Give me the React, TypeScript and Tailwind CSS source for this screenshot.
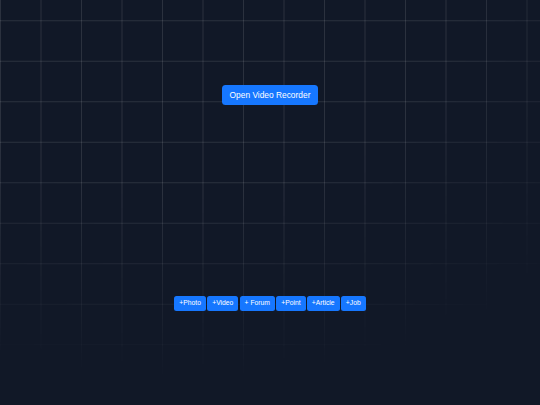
import React from "react";

const tags = ["+Photo", "+Video", "+ Forum", "+Point", "+Article", "+Job"];

export default function App() {
  return (
    <div className="relative w-full h-[405px] overflow-hidden bg-[#111827] font-['Liberation_Sans',Arial,sans-serif]">
      <div className="absolute inset-0 bg-[linear-gradient(to_right,rgba(255,255,255,0.11)_1px,transparent_1px),linear-gradient(to_bottom,rgba(255,255,255,0.11)_1px,transparent_1px)] bg-[size:40.5px_40.5px] bg-[position:0_20.25px] [mask-image:radial-gradient(ellipse_100%_95%_at_35%_0%,black_50%,transparent_100%)]" />
      <div className="relative flex flex-col items-center pt-[85px]">
        <button className="h-[19.5px] px-[7.6px] rounded-[3.5px] bg-[#1677ff] text-white text-[8.4px] leading-none flex items-center">
          Open Video Recorder
        </button>
        <div className="mt-[191.5px] flex gap-[1.3px]">
          {tags.map((t) => (
            <button
              key={t}
              className="h-[15.3px] px-[5px] rounded-[2.5px] bg-[#1677ff] text-white text-[6.75px] leading-none flex items-center whitespace-pre"
            >
              {t}
            </button>
          ))}
        </div>
      </div>
    </div>
  );
}
